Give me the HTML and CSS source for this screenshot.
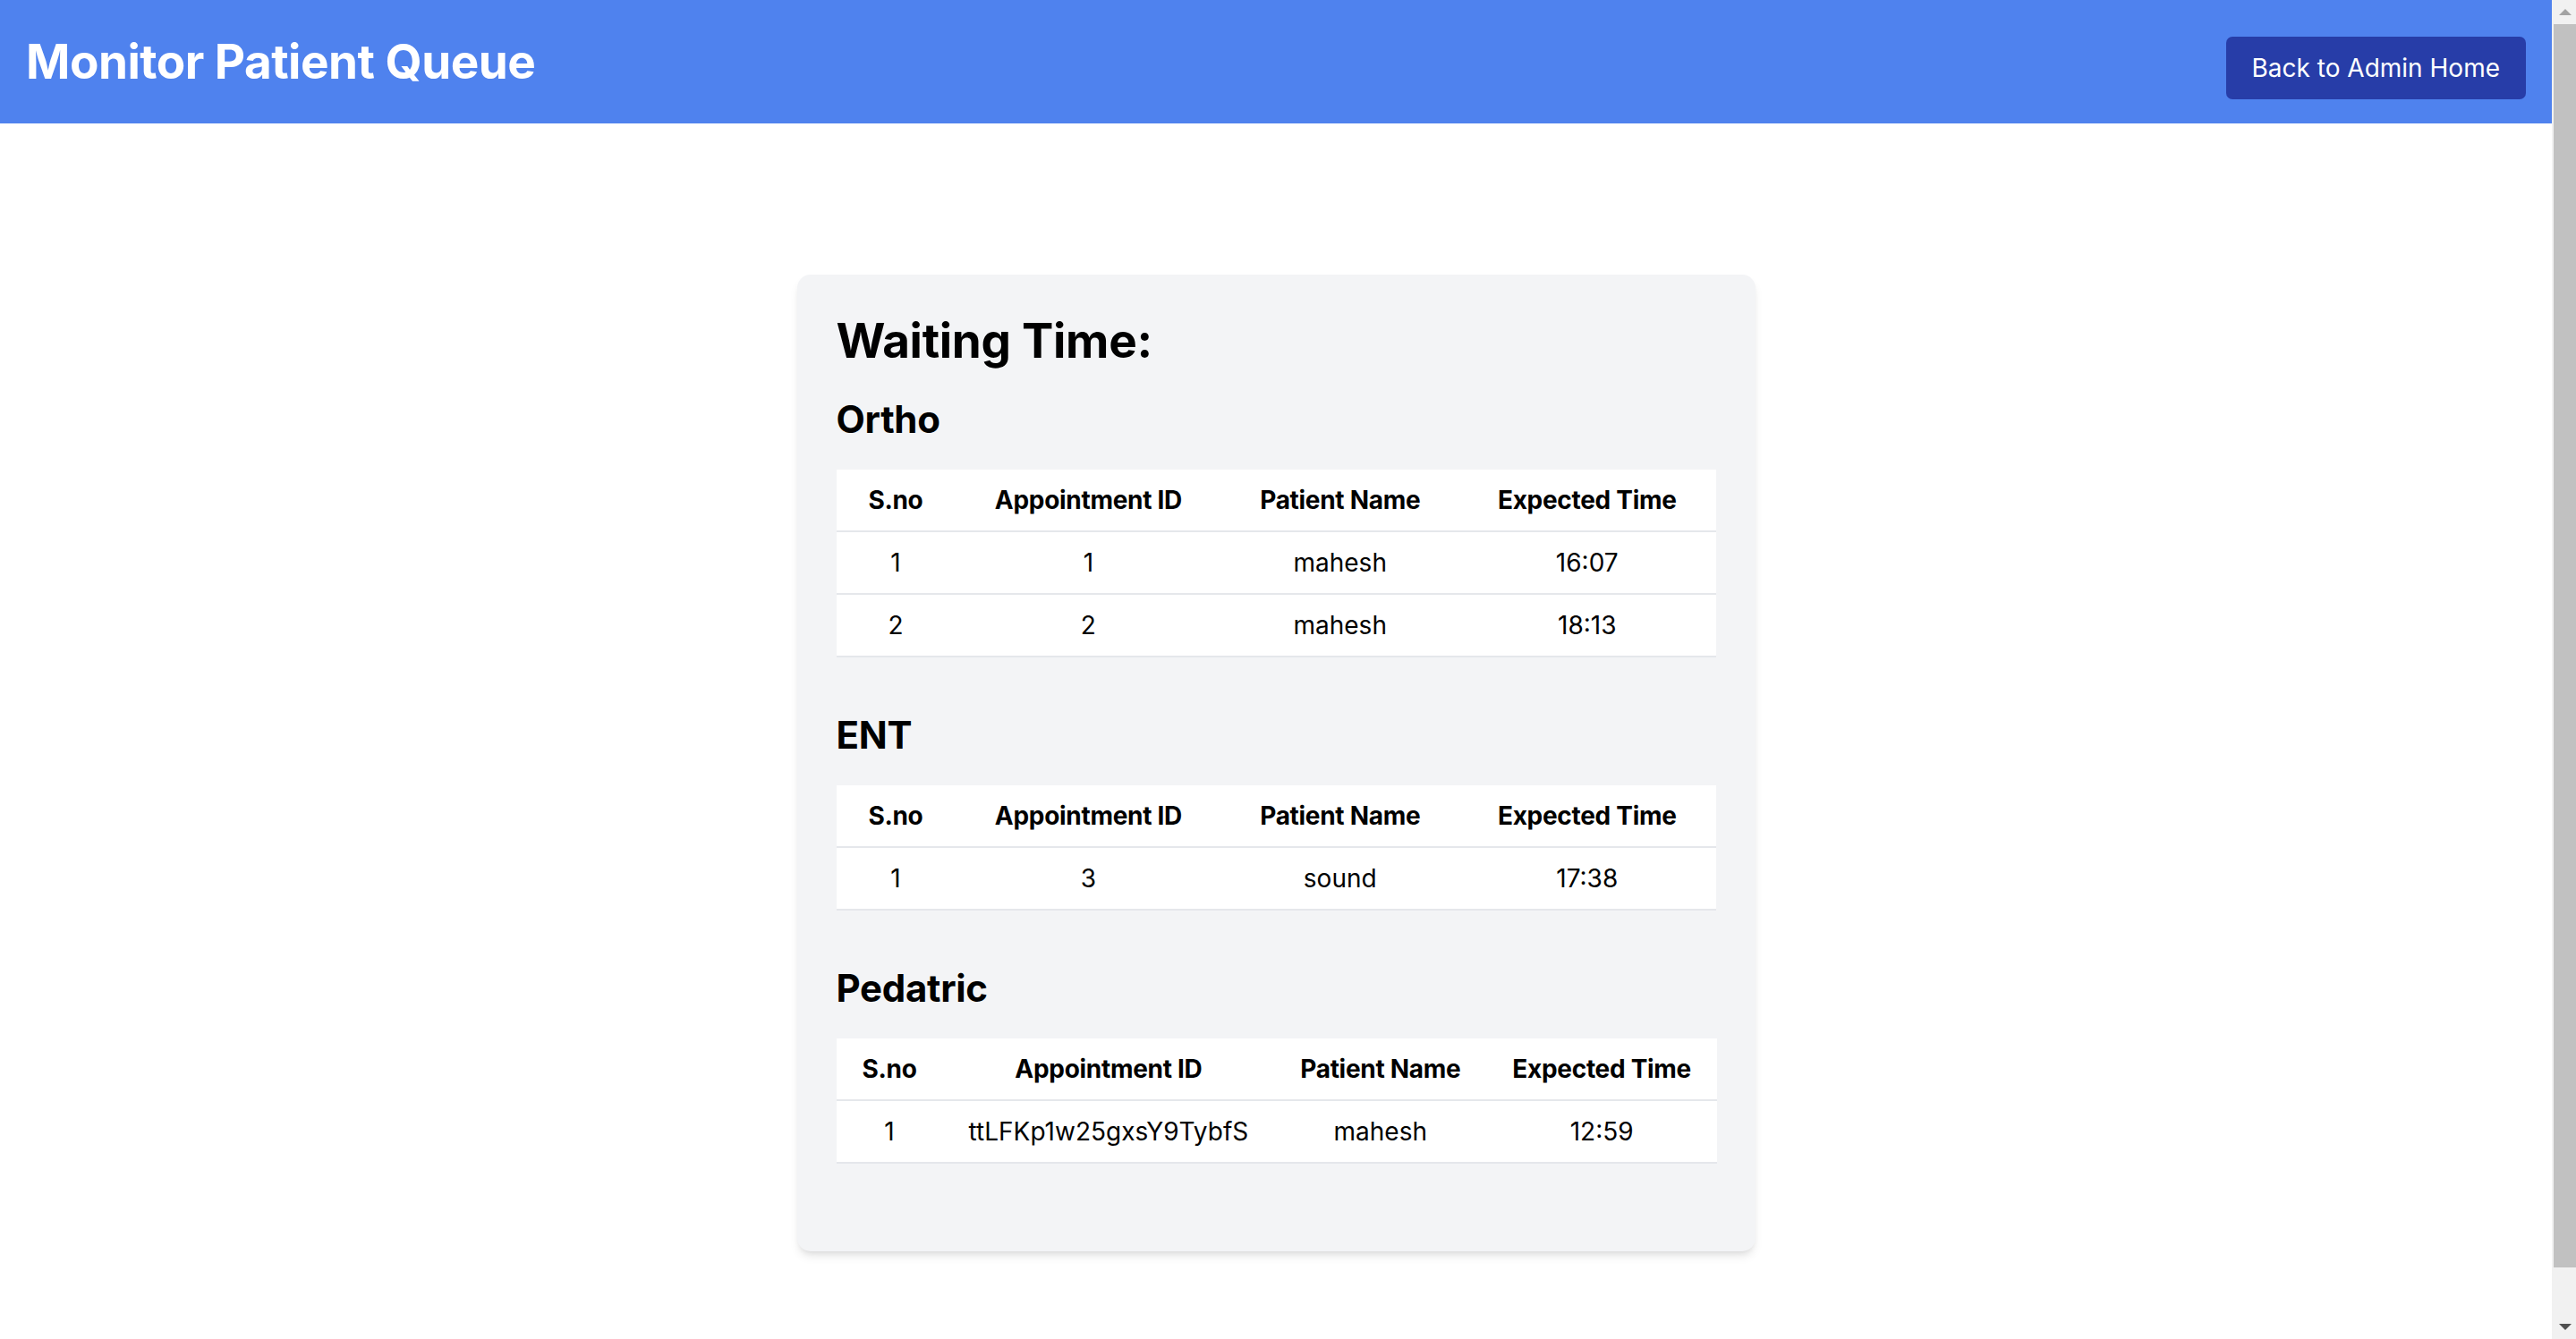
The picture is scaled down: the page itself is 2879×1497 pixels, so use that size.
FILE: index.html
```html
<!DOCTYPE html>
<html lang="en">
<head>
<meta charset="utf-8">
<title>Monitor Patient Queue</title>
<link rel="stylesheet" href="styles.css">
</head>
<body>
<header class="topbar">
  <h1 class="topbar-title">Monitor Patient Queue</h1>
  <button class="back-btn" type="button">Back to Admin Home</button>
</header>
<main class="page">
  <section class="card">
    <h2 class="card-title">Waiting Time:</h2>

    <div class="dept">
      <h3 class="dept-title">Ortho</h3>
      <table class="queue">
        <thead>
          <tr><th>S.no</th><th>Appointment ID</th><th>Patient Name</th><th>Expected Time</th></tr>
        </thead>
        <tbody>
          <tr><td>1</td><td>1</td><td>mahesh</td><td>16:07</td></tr>
          <tr><td>2</td><td>2</td><td>mahesh</td><td>18:13</td></tr>
        </tbody>
      </table>
    </div>

    <div class="dept">
      <h3 class="dept-title">ENT</h3>
      <table class="queue">
        <thead>
          <tr><th>S.no</th><th>Appointment ID</th><th>Patient Name</th><th>Expected Time</th></tr>
        </thead>
        <tbody>
          <tr><td>1</td><td>3</td><td>sound</td><td>17:38</td></tr>
        </tbody>
      </table>
    </div>

    <div class="dept">
      <h3 class="dept-title">Pedatric</h3>
      <table class="queue">
        <thead>
          <tr><th>S.no</th><th>Appointment ID</th><th>Patient Name</th><th>Expected Time</th></tr>
        </thead>
        <tbody>
          <tr><td>1</td><td>ttLFKp1w25gxsY9TybfS</td><td>mahesh</td><td>12:59</td></tr>
        </tbody>
      </table>
    </div>
  </section>
</main>

<div class="scrollbar" aria-hidden="true">
  <span class="sb-btn"><span class="sb-arrow-up"></span></span>
  <span class="sb-thumb"></span>
  <span class="sb-rest"></span>
  <span class="sb-btn"><span class="sb-arrow-down"></span></span>
</div>
</body>
</html>
```

FILE: styles.css
```css
html, body {
  margin: 0;
  padding: 0;
}

body {
  padding-right: 27px;
  font-family: Inter, "Noto Sans", "Liberation Sans", sans-serif;
  color: #000000;
  background: #ffffff;
}

/* Classic scrollbar drawn over the right edge */
.scrollbar {
  position: fixed;
  top: 0;
  right: 0;
  bottom: 0;
  width: 27px;
  display: flex;
  flex-direction: column;
  background: #f1f1f1;
}

.sb-btn {
  flex: 0 0 27px;
  display: flex;
  align-items: center;
  justify-content: center;
  padding-left: 3px;
}

.sb-arrow-up {
  width: 0;
  height: 0;
  border-left: 7px solid transparent;
  border-right: 7px solid transparent;
  border-bottom: 7px solid #a3a3a3;
}

.sb-arrow-down {
  width: 0;
  height: 0;
  border-left: 7px solid transparent;
  border-right: 7px solid transparent;
  border-top: 7px solid #505050;
}

.sb-thumb {
  flex: 0 0 1390px;
  margin-left: 2px;
  background: #c1c1c1;
}

.sb-rest {
  flex: 1 1 auto;
}

/* Top bar */
.topbar {
  display: flex;
  justify-content: space-between;
  align-items: center;
  box-sizing: border-box;
  height: 138px;
  padding: 0 29px;
  background: #4f82ee;
}

.topbar-title {
  margin: 0;
  color: #ffffff;
  font-size: 53px;
  font-weight: 700;
  line-height: 66px;
  letter-spacing: -0.5px;
}

.back-btn {
  margin-top: 14px;
  padding: 13px 29px;
  border: none;
  border-radius: 7px;
  background: #273da8;
  color: #ffffff;
  font-family: inherit;
  font-size: 28px;
  line-height: 44px;
  cursor: pointer;
}

/* Page */
.page {
  display: flex;
  justify-content: center;
  padding: 169px 0 90px;
}

.card {
  box-sizing: border-box;
  width: 1071px;
  padding: 41px 44px 41px;
  background: #f3f4f6;
  border-radius: 15px;
  box-shadow: 0 7px 11px -2px rgba(0, 0, 0, 0.1), 0 4px 7px -4px rgba(0, 0, 0, 0.1);
}

.card-title {
  margin: 0 0 25px;
  font-size: 53px;
  font-weight: 700;
  line-height: 66px;
  letter-spacing: -0.3px;
}

.dept {
  margin-bottom: 57px;
}

.dept-title {
  margin: 0 0 27px;
  font-size: 42px;
  font-weight: 700;
  line-height: 59px;
  letter-spacing: -0.3px;
}

.queue {
  width: 100%;
  border-collapse: collapse;
  background: #ffffff;
}

.queue th,
.queue td {
  padding: 12px 29px;
  text-align: center;
  font-size: 28px;
  line-height: 44px;
  white-space: nowrap;
  border-bottom: 2px solid #e5e7eb;
}

.queue th {
  font-weight: 700;
  letter-spacing: -0.3px;
}

.queue td {
  font-weight: 400;
}
```
